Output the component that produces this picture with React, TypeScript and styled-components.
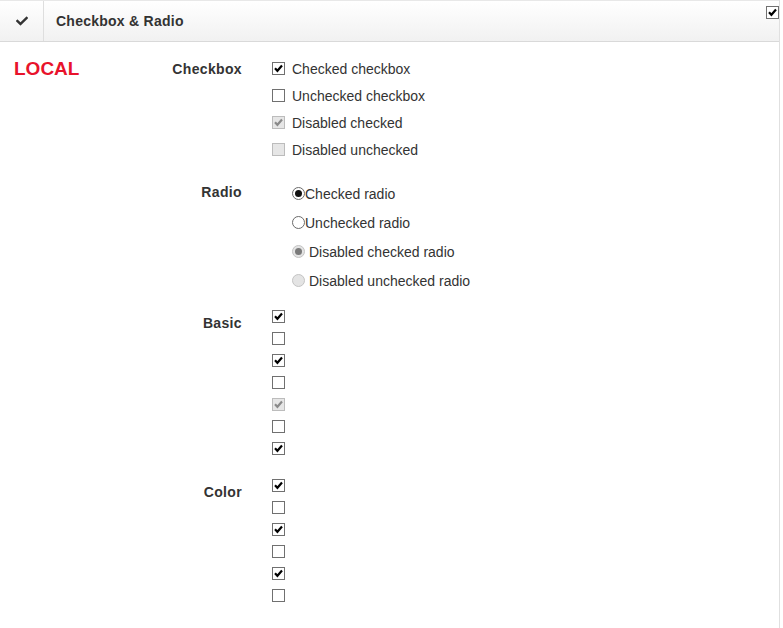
import React from 'react'
import styled, { createGlobalStyle } from 'styled-components'
import { FaCheck } from 'react-icons/fa'

const GlobalStyle = createGlobalStyle`
  body {
    margin: 0;
    font-family: "Liberation Sans", Arial, sans-serif;
    font-size: 14px;
    color: #333;
    background: #fff;
  }
`

const Panel = styled.div`
  position: relative;
  width: 780px;
  min-height: 100vh;
  box-sizing: border-box;
  border-right: 1px solid #e0e0e0;
`

const Header = styled.div`
  display: flex;
  height: 40px;
  border-top: 1px solid #e8e8e8;
  border-bottom: 1px solid #d9d9d9;
  background: linear-gradient(to bottom, #ffffff, #f1f1f1);
`

const HeaderIcon = styled.div`
  width: 43px;
  display: flex;
  align-items: center;
  justify-content: center;
  border-right: 1px solid #dedede;
  color: #333;
`

const HeaderTitle = styled.div`
  display: flex;
  align-items: center;
  padding-left: 12px;
  font-weight: bold;
  font-size: 14px;
  letter-spacing: 0.25px;
`

const Corner = styled.div`
  position: absolute;
  top: 5px;
  right: 0;
`

const Body = styled.div`
  display: flex;
  padding: 13px 0 0 14px;
`

const LocalTag = styled.div`
  width: 100px;
  line-height: 27px;
  font-size: 19px;
  font-weight: bold;
  color: #e8132b;
`

const Form = styled.div`
  display: flex;
  flex-direction: column;
`

const Group = styled.div<{ $top: number }>`
  display: flex;
  margin-top: ${({ $top }) => $top}px;
`

const GroupLabel = styled.div<{ $pad: number; $lh: number }>`
  width: 128px;
  text-align: right;
  font-weight: bold;
  letter-spacing: 0.35px;
  padding-top: ${({ $pad }) => $pad}px;
  line-height: ${({ $lh }) => $lh}px;
`

const Controls = styled.div<{ $indent?: number }>`
  display: flex;
  flex-direction: column;
  margin-left: ${({ $indent }) => 30 + ($indent || 0)}px;
`

const Row = styled.label<{ $h: number; $gap: number }>`
  display: flex;
  align-items: center;
  height: ${({ $h }) => $h}px;
  gap: ${({ $gap }) => $gap}px;
`

const Box = styled.span<{ $disabled?: boolean }>`
  display: inline-flex;
  width: 13px;
  height: 13px;
  box-sizing: border-box;
  border: 1px solid ${({ $disabled }) => ($disabled ? '#bcbcbc' : '#707070')};
  background: ${({ $disabled }) => ($disabled ? '#e6e6e6' : '#fff')};
`

const Round = styled.span<{ $disabled?: boolean }>`
  display: inline-flex;
  align-items: center;
  justify-content: center;
  width: 13px;
  height: 13px;
  box-sizing: border-box;
  border-radius: 50%;
  border: 1px solid ${({ $disabled }) => ($disabled ? '#c4c4c4' : '#6a6a6a')};
  background: ${({ $disabled }) => ($disabled ? '#e4e4e4' : '#fff')};
`

const Dot = styled.span<{ $disabled?: boolean }>`
  width: 7px;
  height: 7px;
  border-radius: 50%;
  background: ${({ $disabled }) => ($disabled ? '#7a7a7a' : '#111')};
`

type CheckProps = { checked?: boolean; disabled?: boolean }

const Check = ({ checked, disabled }: CheckProps) => (
  <Box $disabled={disabled}>
    {checked && (
      <svg width="11" height="11" viewBox="0 0 11 11">
        <path d="M2 5.3 L4.4 7.8 L9 2.6" fill="none" stroke={disabled ? '#8a8a8a' : '#000'} strokeWidth="2.2" />
      </svg>
    )}
  </Box>
)

const Radio = ({ checked, disabled }: CheckProps) => (
  <Round $disabled={disabled}>{checked && <Dot $disabled={disabled} />}</Round>
)

const checkboxRows = [
  { text: 'Checked checkbox', checked: true },
  { text: 'Unchecked checkbox' },
  { text: 'Disabled checked', checked: true, disabled: true },
  { text: 'Disabled unchecked', disabled: true },
]

const radioRows = [
  { text: 'Checked radio', checked: true },
  { text: 'Unchecked radio' },
  { text: 'Disabled checked radio', checked: true, disabled: true },
  { text: 'Disabled unchecked radio', disabled: true },
]

const basic: CheckProps[] = [
  { checked: true },
  {},
  { checked: true },
  {},
  { checked: true, disabled: true },
  {},
  { checked: true },
]

const color: CheckProps[] = [{ checked: true }, {}, { checked: true }, {}, { checked: true }, {}]

const App = () => {
  return (
    <Panel>
      <GlobalStyle />
      <Header>
        <HeaderIcon>
          <FaCheck size={12} />
        </HeaderIcon>
        <HeaderTitle>Checkbox &amp; Radio</HeaderTitle>
      </Header>
      <Corner>
        <Check checked />
      </Corner>
      <Body>
        <LocalTag>LOCAL</LocalTag>
        <Form>
          <Group $top={0}>
            <GroupLabel $pad={1} $lh={27}>Checkbox</GroupLabel>
            <Controls>
              {checkboxRows.map((r) => (
                <Row key={r.text} $h={27} $gap={7}>
                  <Check checked={r.checked} disabled={r.disabled} />
                  {r.text}
                </Row>
              ))}
            </Controls>
          </Group>
          <Group $top={16}>
            <GroupLabel $pad={1} $lh={25}>Radio</GroupLabel>
            <Controls $indent={20}>
              {radioRows.map((r) => (
                <Row key={r.text} $h={29} $gap={r.disabled ? 4 : 0}>
                  <Radio checked={r.checked} disabled={r.disabled} />
                  {r.text}
                </Row>
              ))}
            </Controls>
          </Group>
          <Group $top={10}>
            <GroupLabel $pad={7} $lh={22}>Basic</GroupLabel>
            <Controls>
              {basic.map((b, i) => (
                <Row key={i} $h={22} $gap={0}>
                  <Check checked={b.checked} disabled={b.disabled} />
                </Row>
              ))}
            </Controls>
          </Group>
          <Group $top={15}>
            <GroupLabel $pad={7} $lh={22}>Color</GroupLabel>
            <Controls>
              {color.map((b, i) => (
                <Row key={i} $h={22} $gap={0}>
                  <Check checked={b.checked} disabled={b.disabled} />
                </Row>
              ))}
            </Controls>
          </Group>
        </Form>
      </Body>
    </Panel>
  )
}

export default App
